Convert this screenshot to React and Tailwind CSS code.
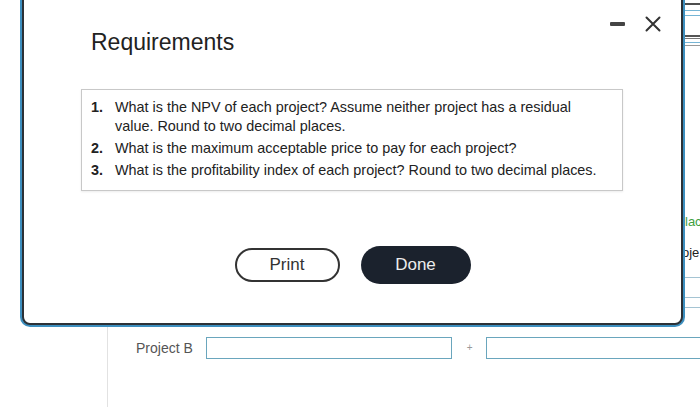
import React from "react"

const items = [
  "What is the NPV of each project? Assume neither project has a residual value. Round to two decimal places.",
  "What is the maximum acceptable price to pay for each project?",
  "What is the profitability index of each project? Round to two decimal places.",
]

function RightStrip() {
  return (
    <div className="flex w-[15px] shrink-0 flex-col text-[13px] leading-[16px]">
      <div className="mt-[3px] h-[2px] bg-[#4d4d4d]" />
      <div className="mt-[5px] h-px bg-[#76b5d5]" />
      <div className="mt-[4px] h-px bg-[#76b5d5]" />
      <div className="mt-[19px] h-[2px] bg-[#555]" />
      <div className="mt-px h-px bg-[#777]" />
      <div className="mt-[3px] h-px bg-[#76b5d5]" />
      <div className="mt-[2px] h-px bg-[#999]" />
      <div className="mt-[168px] whitespace-nowrap text-[#3f9f3f]">lac</div>
      <div className="-ml-[3px] mt-[15px] whitespace-nowrap text-[#222]">oje</div>
      <div className="mt-[16px] h-px bg-[#a5c4d3]" />
      <div className="mt-[19px] h-px bg-[#a5c4d3]" />
      <div className="mt-[9px] h-px bg-[#a5c4d3]" />
    </div>
  )
}

function Modal() {
  return (
    <div className="absolute left-[22px] top-[-12px] h-[337px] w-[661px] rounded-[8px] border-2 border-[#2c3136] bg-white shadow-[0_0_0_2px_#3d8fbf]">
      <div className="absolute right-[20px] top-[26px] flex items-center gap-[20px]">
        <div className="h-[4px] w-[15px] rounded-[1px] bg-[#444]" />
        <svg width="16" height="16" viewBox="0 0 16 16">
          <path d="M1.5 1.5 L14.5 14.5 M14.5 1.5 L1.5 14.5" stroke="#333" strokeWidth="2" strokeLinecap="round" />
        </svg>
      </div>

      <h1 className="pl-[67px] pt-[38px] text-[23px] leading-[28px] text-[#222]">Requirements</h1>

      <div className="ml-[57px] mt-[33px] w-[542px] border border-[#c8c8c8] pb-[10px] pl-[9px] pr-[12px] pt-[8px] shadow-[0_1px_2px_rgba(0,0,0,0.08)]">
        <ol className="flex flex-col gap-[3px] text-[14.4px] leading-[19px] text-[#222]">
          {items.map((text, i) => (
            <li key={i} className="flex">
              <span className="w-[24px] shrink-0 font-bold">{i + 1}.</span>
              <span>{text}</span>
            </li>
          ))}
        </ol>
      </div>

      <div className="mt-[55px] flex items-center justify-center gap-[21px]">
        <button className="h-[34px] w-[105px] rounded-full border-2 border-[#333] bg-white text-[17px] text-[#333]">
          Print
        </button>
        <button className="h-[38px] w-[110px] rounded-full bg-[#1b222d] text-[17px] text-[#ececec]">
          Done
        </button>
      </div>
    </div>
  )
}

export default function App() {
  return (
    <div className="relative h-[407px] w-[700px] overflow-hidden bg-white font-['Liberation_Sans',Arial,sans-serif]">
      <div className="flex h-full">
        <div className="w-[108px] shrink-0 border-r border-[#e2e2e2]" />
        <div className="flex flex-1 flex-col">
          <div className="flex h-[337px] justify-end">
            <RightStrip />
          </div>
          <div className="flex h-[22px] items-center">
            <span className="ml-[28px] text-[14px] text-[#555]">Project B</span>
            <div className="ml-[13px] h-[22px] w-[246px] border-[1.5px] border-[#6aa6bd]" />
            <span className="ml-[15px] w-[6px] text-[10px] leading-none text-[#999]">+</span>
            <div className="ml-[13px] h-[22px] flex-1 border-[1.5px] border-r-0 border-[#6aa6bd]" />
          </div>
        </div>
      </div>
      <Modal />
    </div>
  )
}
